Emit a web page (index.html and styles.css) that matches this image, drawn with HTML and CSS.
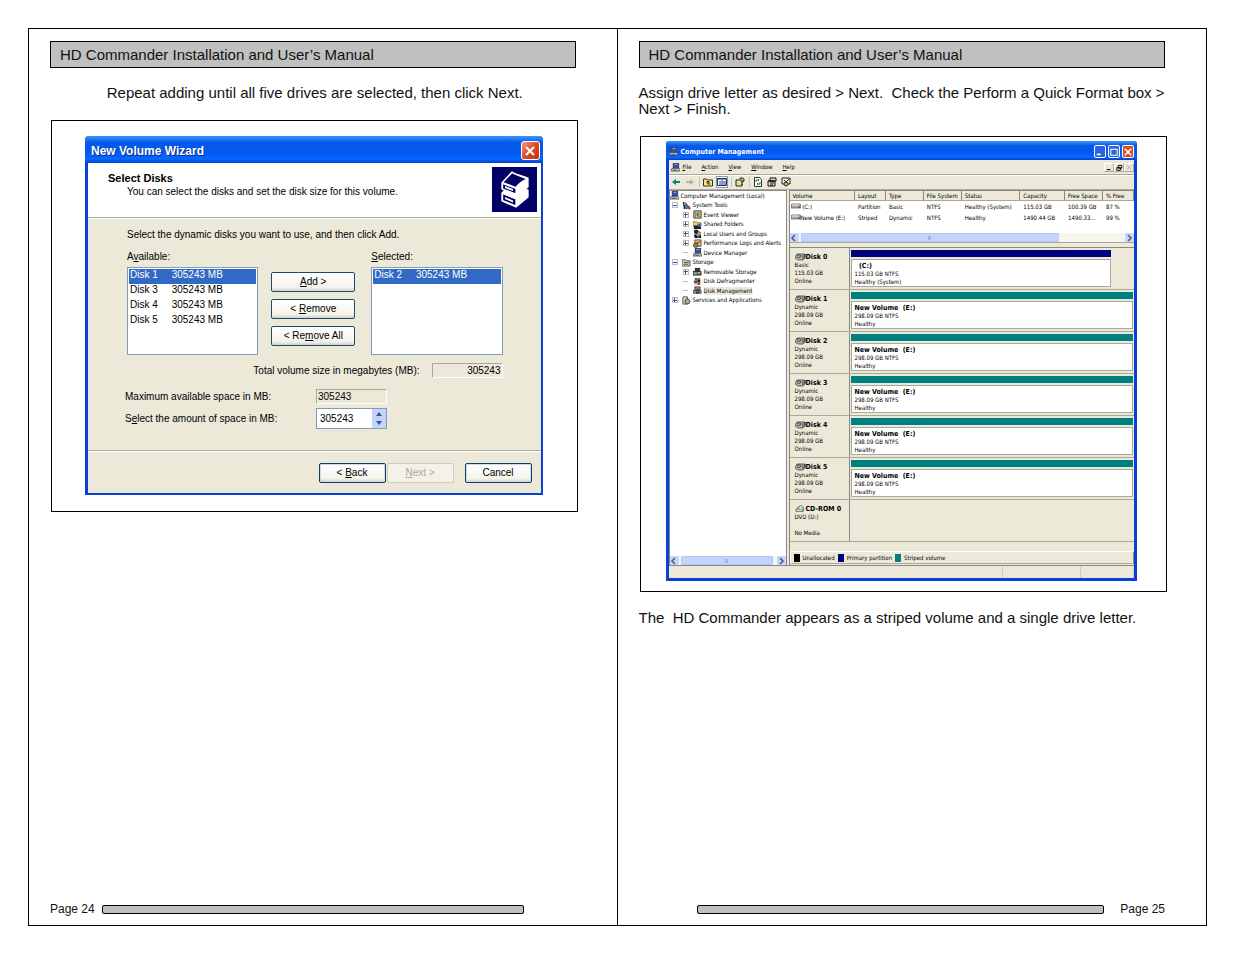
FILE: index.html
```html
<!DOCTYPE html>
<html lang="en">
<head>
<meta charset="utf-8">
<title>HD Commander Installation and User’s Manual</title>
<link rel="stylesheet" href="styles.css">
</head>
<body>
<svg class="defs" aria-hidden="true">
  <symbol id="pc" viewBox="0 0 10 10"><path d="M2 0h7v6H2z" fill="#445"/><path d="M3 1h5v4H3z" fill="#2b50c8"/><path d="M4 1h3v1H4z" fill="#9bd"/><path d="M1 6h8l1 3H0z" fill="#c8c8c8" stroke="#333" stroke-width=".7"/><path d="M2 8h5" stroke="#333" stroke-width=".8"/></symbol>
  <symbol id="tools" viewBox="0 0 10 10"><path d="M1 1h3v8H2z" fill="#222"/><path d="M2 2l2-1 1 3-2 1z" fill="#e8c020"/><path d="M4 3l5 6" stroke="#555" stroke-width="2"/><path d="M4 5h3v4H4z" fill="#3c72c0"/><path d="M7 6h2v3H7z" fill="#c03030"/></symbol>
  <symbol id="event" viewBox="0 0 10 10"><path d="M1 1h8v8H1z" fill="#f3e48c" stroke="#222"/><path d="M3 2v6M5 3h3M5 5h3M5 7h3" stroke="#864"/><path d="M4 3h2v4H4z" fill="#36c"/></symbol>
  <symbol id="shared" viewBox="0 0 10 10"><path d="M0 2h4l1 1h4v4H0z" fill="#f0d050" stroke="#554" stroke-width=".7"/><path d="M1 6h5l3 2v2H1z" fill="#222"/><path d="M5 4h4v3H5z" fill="#3b62c4"/></symbol>
  <symbol id="users" viewBox="0 0 10 10"><circle cx="3.500" cy="3" r="2.500" fill="#222"/><circle cx="6.500" cy="5" r="2" fill="#e0b080" stroke="#222" stroke-width=".8"/><path d="M1 6h3l1 4H2zM4 8l5-1v3H4z" fill="#111"/><path d="M5 8h2v2H5z" fill="#3b62c4"/></symbol>
  <symbol id="perf" viewBox="0 0 10 10"><path d="M2 1h7v7H2z" fill="#d8d09a" stroke="#222" stroke-width=".8"/><path d="M3 6l2-3 1 2 2-3" stroke="#c02020" fill="none"/><circle cx="3" cy="7" r="2.500" fill="#998830" stroke="#222" stroke-width=".7"/></symbol>
  <symbol id="storage" viewBox="0 0 10 10"><path d="M0 2h4l1 1h4v6H0z" fill="#c9cfae" stroke="#443" stroke-width=".8"/><path d="M2 5h5M2 7h5" stroke="#555"/><path d="M6 4h2v2H6z" fill="#5a8"/></symbol>
  <symbol id="remov" viewBox="0 0 10 10"><path d="M2 1h6v4H2z" fill="#333"/><path d="M0 5h9v4H0z" fill="#666" stroke="#111" stroke-width=".8"/><path d="M1 6h3v2H1z" fill="#6cc48a"/><path d="M5 6h3v1H5z" fill="#ddd"/></symbol>
  <symbol id="defrag" viewBox="0 0 10 10"><path d="M2 1h3v3H2zM5 6h3v3H5z" fill="#d22"/><path d="M5 1h3v3H5z" fill="#2aa050"/><path d="M1 4h4v3H1z" fill="#2848c8"/><path d="M5 3h3v3H5z" fill="#222"/><path d="M2 7h3v2H2z" fill="#e8c020"/></symbol>
  <symbol id="dmgmt" viewBox="0 0 10 10"><path d="M2 1h6v3H2z" fill="#999" stroke="#222" stroke-width=".8"/><path d="M0 5h9v3H0z" fill="#bbb" stroke="#222" stroke-width=".8"/><path d="M5 2l3 6-5 1z" fill="#444"/><path d="M1 6h2v1H1z" fill="#c33"/></symbol>
  <symbol id="serv" viewBox="0 0 10 10"><path d="M1 1h5v8H1z" fill="#e6dfb0" stroke="#222" stroke-width=".8"/><circle cx="6" cy="6" r="2.800" fill="#8fa4c4" stroke="#333" stroke-width=".8"/><circle cx="6" cy="6" r="1" fill="#e8c020"/></symbol>
  <symbol id="drive" viewBox="0 0 10 6"><path d="M1 1h8l1 1v3H0V2z" fill="#aaa" stroke="#555" stroke-width=".7"/><path d="M1 2h7" stroke="#eee"/><path d="M7 4h2" stroke="#333" stroke-width=".8"/></symbol>
  <symbol id="disk" viewBox="0 0 11 8"><path d="M2 1h8v4l-2 2H3L0 5z" fill="#b5b5b0" stroke="#444" stroke-width=".8"/><path d="M2 3c1-2 4-1 4 0s-2 2-4 1M8 2v4M10 1v4" stroke="#222" fill="none" stroke-width=".8"/></symbol>
  <symbol id="cd" viewBox="0 0 11 10"><path d="M0 5l2-2h7v5H0z" fill="#aaa" stroke="#444" stroke-width=".8"/><circle cx="6" cy="3.500" r="3" fill="#b7dca0" stroke="#487" stroke-width=".8"/><circle cx="6" cy="3.500" r=".8" fill="#fff"/><path d="M1 7h6" stroke="#eee"/></symbol>
  <symbol id="x" viewBox="0 0 10 10"><path d="M1 1l8 8M9 1L1 9" stroke="currentColor" stroke-width="2"/></symbol>
  <symbol id="left" viewBox="0 0 8 8"><path d="M5 1L2 4l3 3" fill="none" stroke="#4d6185" stroke-width="1.700"/></symbol>
  <symbol id="right" viewBox="0 0 8 8"><path d="M3 1l3 3-3 3" fill="none" stroke="#4d6185" stroke-width="1.700"/></symbol>
</svg>

<main class="spread">
  <section class="page">
    <h1 class="running-head">HD Commander Installation and User’s Manual</h1>
    <p class="para centered">Repeat adding until all five drives are selected, then click Next.</p>
    <figure class="figure figure-wizard">
      <div class="wizard">
        <div class="wizard-title">
          <span>New Volume Wizard</span>
          <button class="close" aria-label="Close"><svg><use href="#x"/></svg></button>
        </div>
        <div class="wizard-head">
          <div>
            <h2>Select Disks</h2>
            <p>You can select the disks and set the disk size for this volume.</p>
          </div>
          <svg class="books" viewBox="0 0 45 45" aria-hidden="true">
            <path d="M0 0h45v45H0z" fill="#000066"/>
            <g stroke="#fff" stroke-width="1.300" stroke-linejoin="round">
              <path d="M10 26l3-3 12 5 8-6 3 1v7L24 40 10 34z" fill="#fff"/>
              <path d="M10.500 26.500L24 32v7l-13.500-5.500z" fill="#000066"/>
              <path d="M13 30l8 3.500v2L13 32z" fill="#fff" stroke="none"/>
              <path d="M10 16L20 5c4 3 9 3 16 6v9L25 28 10 22z" fill="#fff"/>
              <path d="M10.500 15.500L20 5.500c4 3 9 3 15 6.500-5 2-8 4-11 8.500z" fill="#000066"/>
              <path d="M10.500 16.500L24 21.500v5.500l-13.500-5z" fill="#000066"/>
              <path d="M13 19l8 3v2l-8-3z" fill="#fff" stroke="none"/>
            </g>
          </svg>
        </div>
        <div class="wizard-body">
          <p class="hint">Select the dynamic disks you want to use, and then click Add.</p>
          <div class="picker">
            <div class="picker-list">
              <label for="available">A<u>v</u>ailable:</label>
              <select id="available" size="5">
                <option selected>Disk 1&nbsp;&nbsp;&nbsp;&nbsp; 305243 MB</option>
                <option>Disk 3&nbsp;&nbsp;&nbsp;&nbsp; 305243 MB</option>
                <option>Disk 4&nbsp;&nbsp;&nbsp;&nbsp; 305243 MB</option>
                <option>Disk 5&nbsp;&nbsp;&nbsp;&nbsp; 305243 MB</option>
              </select>
            </div>
            <div class="picker-buttons">
              <button class="btn"><u>A</u>dd &gt;</button>
              <button class="btn">&lt; <u>R</u>emove</button>
              <button class="btn">&lt; Re<u>m</u>ove All</button>
            </div>
            <div class="picker-list">
              <label for="selected"><u>S</u>elected:</label>
              <select id="selected" size="5">
                <option selected>Disk 2&nbsp;&nbsp;&nbsp;&nbsp; 305243 MB</option>
              </select>
            </div>
          </div>
          <div class="total">
            <label for="total">Total volume size in megabytes (MB):</label>
            <input class="field readonly right" id="total" value="305243" readonly>
          </div>
          <div class="amounts">
            <label for="max">Maximum available space in MB:</label>
            <input class="field readonly" id="max" value="305243" readonly>
            <label for="amount">S<u>e</u>lect the amount of space in MB:</label>
            <div class="spinner">
              <input class="field" id="amount" value="305243">
              <div class="spin-buttons">
                <button aria-label="Increase"><svg viewBox="0 0 8 6"><path d="M4 1l3 4H1z"/></svg></button>
                <button aria-label="Decrease"><svg viewBox="0 0 8 6"><path d="M4 5L1 1h6z"/></svg></button>
              </div>
            </div>
          </div>
        </div>
        <div class="wizard-foot">
          <button class="btn strong">&lt; <u>B</u>ack</button>
          <button class="btn strong" disabled><u>N</u>ext &gt;</button>
          <button class="btn strong cancel">Cancel</button>
        </div>
      </div>
    </figure>
    <footer class="page-foot"><span>Page 24</span><i class="rule"></i></footer>
  </section>

  <section class="page">
    <h1 class="running-head">HD Commander Installation and User’s Manual</h1>
    <p class="para">Assign drive letter as desired &gt; Next.&nbsp; Check the Perform a Quick Format box &gt; Next &gt; Finish.</p>
    <figure class="figure figure-console">
      <div class="console">
        <div class="console-title">
          <svg class="ico"><use href="#pc"/></svg><span>Computer Management</span>
          <button class="cap" aria-label="Minimize"><svg viewBox="0 0 10 10"><path d="M1 8h5" stroke="#fff" stroke-width="2"/></svg></button>
          <button class="cap" aria-label="Maximize"><svg viewBox="0 0 10 10"><path d="M1 1.500h8V9H1z" fill="none" stroke="#fff" stroke-width="1.300"/></svg></button>
          <button class="cap cap-close" aria-label="Close"><svg><use href="#x"/></svg></button>
        </div>
        <nav class="menubar">
          <svg class="ico"><use href="#pc"/></svg>
          <button><u>F</u>ile</button><button><u>A</u>ction</button><button><u>V</u>iew</button><button><u>W</u>indow</button><button><u>H</u>elp</button>
          <span class="mdi">
            <button aria-label="Minimize document"><svg viewBox="0 0 10 10"><path d="M2 8h5" stroke="#000" stroke-width="1.500"/></svg></button>
            <button aria-label="Restore document"><svg viewBox="0 0 10 10"><path d="M4 2h5v4H4zM2 5h5v4H2z" fill="#ece9d8" stroke="#000" stroke-width="1.300"/></svg></button>
            <button aria-label="Close document" disabled><svg viewBox="0 0 10 10"><path d="M2 2l6 6M8 2L2 8" stroke="#aaa" stroke-width="1.300"/></svg></button>
          </span>
        </nav>
        <div class="toolbar">
          <button aria-label="Back"><svg viewBox="0 0 10 10"><path d="M5 2L1 5l4 3V6h4V4H5z" fill="#177c74"/></svg></button>
          <button aria-label="Forward"><svg viewBox="0 0 10 10"><path d="M5 2l4 3-4 3V6H1V4h4z" fill="#b5b3a8"/></svg></button>
          <i></i>
          <button aria-label="Up one level"><svg viewBox="0 0 10 10"><path d="M.5 2h3l1 1h5v6h-9z" fill="#f3e27a" stroke="#333"/><path d="M7 7H5V4M3.500 5.500L5 4l1.500 1.500" stroke="#111" fill="none"/></svg></button>
          <button class="pressed" aria-label="Show console tree"><svg viewBox="0 0 10 10"><path d="M.5 1.500h9v7h-9z" fill="#fff" stroke="#236"/><path d="M0 2h10M5 3v5M2 5h2M2 7h2M6 5h3M6 7h3" stroke="#236"/></svg></button>
          <i></i>
          <button aria-label="Help"><svg viewBox="0 0 10 10"><path d="M1 3h6v6H1z" fill="#eadf9a" stroke="#222"/><path d="M5 2c1-2 4-1 4 1S7 4 7 6M7 7v1" stroke="#443c00" stroke-width="1.300" fill="none"/></svg></button>
          <i></i>
          <button aria-label="Refresh"><svg viewBox="0 0 10 10"><path d="M1.500.5h5l2 2v7h-7z" fill="#fff" stroke="#333"/><path d="M3 5V3h3M7 5v2H4M5 2l1 1-1 1M5 6L4 7l1 1" stroke="#17802a" fill="none"/></svg></button>
          <button aria-label="Properties"><svg viewBox="0 0 10 10"><path d="M3 1h6v3H3zM1 4h7v5H1z" fill="#ddd" stroke="#111"/><path d="M1 4h7M3 6h4M3 8h3" stroke="#111"/></svg></button>
          <button aria-label="Rescan disks"><svg viewBox="0 0 10 10"><path d="M1 1h8v6H1z" fill="#eee" stroke="#222"/><path d="M3 3l2 2 3-3" stroke="#222" fill="none"/><circle cx="5" cy="7" r="2" fill="#d8c850" stroke="#222"/></svg></button>
        </div>
        <div class="panes">
          <div class="tree-pane">
            <ul class="tree">
              <li class="l0"><svg class="ico"><use href="#pc"/></svg>Computer Management (Local)</li>
              <li class="l1"><b class="open"></b><svg class="ico"><use href="#tools"/></svg>System Tools</li>
              <li class="l2"><b></b><svg class="ico"><use href="#event"/></svg>Event Viewer</li>
              <li class="l2"><b></b><svg class="ico"><use href="#shared"/></svg>Shared Folders</li>
              <li class="l2"><b></b><svg class="ico"><use href="#users"/></svg>Local Users and Groups</li>
              <li class="l2"><b></b><svg class="ico"><use href="#perf"/></svg>Performance Logs and Alerts</li>
              <li class="l2"><b class="leaf"></b><svg class="ico"><use href="#pc"/></svg>Device Manager</li>
              <li class="l1"><b class="open"></b><svg class="ico"><use href="#storage"/></svg>Storage</li>
              <li class="l2"><b></b><svg class="ico"><use href="#remov"/></svg>Removable Storage</li>
              <li class="l2"><b class="leaf"></b><svg class="ico"><use href="#defrag"/></svg>Disk Defragmenter</li>
              <li class="l2"><b class="leaf"></b><svg class="ico"><use href="#dmgmt"/></svg><span class="current">Disk Management</span></li>
              <li class="l1"><b></b><svg class="ico"><use href="#serv"/></svg>Services and Applications</li>
            </ul>
            <div class="hscroll"><button aria-label="Scroll left"><svg><use href="#left"/></svg></button><span class="thumb tree-thumb"></span><button aria-label="Scroll right"><svg><use href="#right"/></svg></button></div>
          </div>
          <div class="main-pane">
            <div class="volumes">
              <table>
                <colgroup><col class="c-volume"><col class="c-layout"><col class="c-type"><col class="c-fs"><col class="c-status"><col class="c-cap"><col class="c-free"><col class="c-pct"></colgroup>
                <thead><tr><th>Volume</th><th>Layout</th><th>Type</th><th>File System</th><th>Status</th><th>Capacity</th><th>Free Space</th><th>% Free</th></tr></thead>
                <tbody>
                  <tr><td><svg class="drv"><use href="#drive"/></svg> (C:)</td><td>Partition</td><td>Basic</td><td>NTFS</td><td>Healthy (System)</td><td>115.03 GB</td><td>100.39 GB</td><td>87 %</td></tr>
                  <tr><td><svg class="drv"><use href="#drive"/></svg>New Volume (E:)</td><td>Striped</td><td>Dynamic</td><td>NTFS</td><td>Healthy</td><td>1490.44 GB</td><td>1490.33...</td><td>99 %</td></tr>
                </tbody>
              </table>
              <div class="hscroll"><button aria-label="Scroll left"><svg><use href="#left"/></svg></button><span class="thumb vol-thumb"></span><button aria-label="Scroll right"><svg><use href="#right"/></svg></button></div>
            </div>
            <div class="disks">
              <div class="disk"><div class="disk-info"><strong><svg class="dsk"><use href="#disk"/></svg>Disk 0</strong>Basic<br>115.03 GB<br>Online</div><div class="vol primary"><div class="vol-box"><strong>&nbsp; (C:)</strong>115.03 GB NTFS<br>Healthy (System)</div></div></div>
              <div class="disk"><div class="disk-info"><strong><svg class="dsk"><use href="#disk"/></svg>Disk 1</strong>Dynamic<br>298.09 GB<br>Online</div><div class="vol"><div class="vol-box"><strong>New Volume&nbsp; (E:)</strong>298.09 GB NTFS<br>Healthy</div></div></div>
              <div class="disk"><div class="disk-info"><strong><svg class="dsk"><use href="#disk"/></svg>Disk 2</strong>Dynamic<br>298.09 GB<br>Online</div><div class="vol"><div class="vol-box"><strong>New Volume&nbsp; (E:)</strong>298.09 GB NTFS<br>Healthy</div></div></div>
              <div class="disk"><div class="disk-info"><strong><svg class="dsk"><use href="#disk"/></svg>Disk 3</strong>Dynamic<br>298.09 GB<br>Online</div><div class="vol"><div class="vol-box"><strong>New Volume&nbsp; (E:)</strong>298.09 GB NTFS<br>Healthy</div></div></div>
              <div class="disk"><div class="disk-info"><strong><svg class="dsk"><use href="#disk"/></svg>Disk 4</strong>Dynamic<br>298.09 GB<br>Online</div><div class="vol"><div class="vol-box"><strong>New Volume&nbsp; (E:)</strong>298.09 GB NTFS<br>Healthy</div></div></div>
              <div class="disk"><div class="disk-info"><strong><svg class="dsk"><use href="#disk"/></svg>Disk 5</strong>Dynamic<br>298.09 GB<br>Online</div><div class="vol"><div class="vol-box"><strong>New Volume&nbsp; (E:)</strong>298.09 GB NTFS<br>Healthy</div></div></div>
              <div class="disk"><div class="disk-info"><strong><svg class="dsk"><use href="#cd"/></svg>CD-ROM 0</strong>DVD (D:)<br><br>No Media</div></div>
            </div>
            <div class="legend"><i class="k-un"></i>Unallocated<i class="k-pri"></i>Primary partition<i class="k-str"></i>Striped volume</div>
          </div>
        </div>
        <div class="statusbar"><span></span><span></span><span></span></div>
      </div>
    </figure>
    <p class="para">The&nbsp; HD Commander appears as a striped volume and a single drive letter.</p>
    <footer class="page-foot foot-right"><i class="rule"></i><span>Page 25</span></footer>
  </section>
</main>
</body>
</html>
```
FILE: styles.css
```css
* { box-sizing: border-box; }
body { margin: 0; padding: 28px; background: #fff; color: #111; font-family: "Liberation Sans", Arial, sans-serif; }
h1, h2, p, figure, ul { margin: 0; padding: 0; font-weight: normal; }
button, input, select { font: inherit; color: inherit; margin: 0; padding: 0; }
svg { display: block; }
.defs { display: none; }

/* Manual pages */
.spread { display: grid; grid-template-columns: 1fr 1fr; min-height: calc(100vh - 56px); border: 1px solid #000; }
.page { display: flex; flex-direction: column; min-width: 0; padding: 12px 41px 10px 21px; }
.page:first-child { border-right: 1px solid #000; }
.running-head { border: 1px solid #000; background: #c0c0c0; padding: 0 9px; font-size: 15px; line-height: 25px; margin-bottom: 17px; }
.para { font-size: 15px; line-height: 16px; margin-right: -4px; }
.centered { text-align: center; }
.figure { border: 1px solid #000; margin: 19px -2px 18px 1px; }
.figure-wizard { padding: 15px 34px 16px 33px; }
.figure-console { padding: 4px 29px 10px 25px; }
.page-foot { display: flex; align-items: center; gap: 7px; margin-top: auto; padding-right: 52px; font-size: 12px; line-height: 12px; }
.rule { flex: 1; height: 9px; border: 1px solid #000; border-radius: 2px; background: #c0c0c0; }
.foot-right { gap: 16px; padding: 0 0 0 58px; }

/* New Volume Wizard */
.wizard { background: #ece9d8; border: solid #0a3fd8; border-width: 0 2px 2px 3px; border-radius: 4px 4px 0 0; font-size: 10px; line-height: 14px; color: #000; }
.wizard-title { display: flex; align-items: center; justify-content: space-between; height: 27px; margin: 0 -2px 0 -3px; padding: 2px 3px 0 6px; border-radius: 4px 4px 0 0; background: linear-gradient(#3c96ff, #0558e6 25%, #0458ee 60%, #0668ff 85%, #0340c8); color: #fff; font-size: 12px; font-weight: bold; text-shadow: 1px 1px #0a2a90; }
.close { display: grid; place-items: center; width: 19px; height: 19px; border: 1px solid #fff; border-radius: 3px; background: linear-gradient(135deg, #f09a80, #dc4a24 50%, #b83410); color: #fff; }
.close svg { width: 10px; height: 10px; }
.wizard-head { display: flex; justify-content: space-between; background: #fff; padding: 4px 4px 5px 20px; border-bottom: 1px solid #aca899; }
.wizard-head h2 { font-size: 11px; font-weight: bold; line-height: 14px; padding-top: 4px; }
.wizard-head p { padding-left: 19px; }
.books { width: 45px; height: 45px; }
.wizard-body { padding: 9px 38px 21px 39px; border-top: 1px solid #fff; border-bottom: 1px solid #aca899; }
.hint { margin-bottom: 8px; }
.picker { display: flex; }
.picker-list { display: flex; flex-direction: column; flex: 1; min-width: 0; gap: 3px; }
.picker-list select { height: 88px; border: 1px solid #7f9db9; border-radius: 0; background: #fff; padding: 1px; overflow: hidden; outline: 0; }
.picker-list option { padding: 0 1px; min-height: 0; height: 15px; line-height: 15px; }
.picker-list option:checked { background: #316ac5 linear-gradient(#316ac5, #316ac5); color: #fff; }
.picker-buttons { display: flex; flex-direction: column; gap: 7px; width: 84px; margin: 22px 16px 0 13px; }
.btn { height: 20px; border: 1px solid #1f4a70; border-radius: 2px; background: linear-gradient(#fff, #f4f3ec 80%, #d6d0c4); line-height: 16px; }
.total { display: flex; align-items: center; justify-content: flex-end; gap: 12px; margin-top: 8px; }
.field { width: 71px; height: 15px; border: 1px solid #7f9db9; background: #fff; padding: 0 1px; border-radius: 0; }
.readonly { background: #ece9d8; border-color: #aca899 #fff #fff #aca899; }
.right { text-align: right; }
.amounts { display: grid; grid-template-columns: 191px 71px; row-gap: 4px; align-items: center; margin: 11px 0 0 -2px; }
.spinner { display: flex; height: 21px; border: 1px solid #7f9db9; background: #fff; }
.spinner .field { flex: 1; width: 0; height: auto; border: 0; padding: 0 3px; }
.spin-buttons { display: grid; width: 14px; grid-template-rows: 1fr 1fr; }
.spin-buttons button { display: grid; place-items: center; border: 0; background: #c3d3fb; }
.spin-buttons svg { width: 8px; height: 6px; fill: #3b538c; }
.wizard-foot { display: flex; justify-content: flex-end; padding: 11px 9px 10px; border-top: 1px solid #fff; gap: 1px; }
.strong { width: 67px; height: 20px; border-color: #143a66; box-shadow: inset 0 0 0 1px #cfdcee; }
.strong:disabled { border-color: #cfcbb9; background: #f4f2e8; color: #aca899; box-shadow: none; }
.cancel { margin-left: 10px; }

/* Computer Management console */
.console { background: #ece9d8; border: 3px solid #0a3fd8; border-top: 0; border-radius: 3px 3px 0 0; font-family: "DejaVu Sans Condensed", "DejaVu Sans", sans-serif; font-size: 6px; line-height: 8px; color: #000; }
.ico { flex: none; width: 9px; height: 9px; }
.console-title { display: flex; align-items: center; gap: 2px; height: 19px; margin: 0 -3px; padding: 2px 3px 0; border-radius: 3px 3px 0 0; background: linear-gradient(#3c96ff, #0558e6 25%, #0458ee 60%, #0668ff 85%, #0340c8); color: #fff; font-size: 7px; font-weight: bold; }
.console-title span { flex: 1; padding-left: 1px; }
.cap { display: grid; place-items: center; width: 12px; height: 13px; border: 1px solid #fff; border-radius: 2px; background: #2b63e0; color: #fff; }
.cap svg { width: 8px; height: 8px; }
.cap-close { background: #dc4a24; }
.menubar { display: flex; align-items: center; height: 15px; border-bottom: 1px solid #aca899; padding-left: 2px; }
.menubar button { border: 0; background: none; margin-right: 10px; }
.menubar .ico { margin-right: 3px; }
.mdi { display: flex; margin-left: auto; }
.menubar .mdi button { width: 10px; height: 9px; margin: 0; border: 1px solid; border-color: #fff #aca899 #aca899 #fff; }
.mdi svg { width: 8px; height: 7px; }
.toolbar { display: flex; align-items: center; gap: 2px; height: 15px; border-top: 1px solid #fff; border-bottom: 1px solid #aca899; padding: 0 0 1px 1px; }
.toolbar button { display: grid; place-items: center; width: 12px; height: 12px; border: 1px solid transparent; background: none; }
.toolbar svg { width: 10px; height: 10px; }
.toolbar .pressed { border-color: #7f9db9; background: #fff; }
.toolbar i { width: 1px; height: 10px; margin-left: 1px; background: #c8c4b2; }
.panes { display: grid; grid-template-columns: 118px 1fr; gap: 2px; border-bottom: 1px solid #888; }
.tree-pane { display: flex; flex-direction: column; justify-content: space-between; background: #fff; border: 1px solid #888; border-width: 1px 1px 0 1px; }
.tree { display: grid; grid-auto-rows: 1fr; height: 114px; list-style: none; }
.tree li { display: flex; align-items: center; gap: 2px; white-space: nowrap; }
.tree .l1 { padding-left: 2px; }
.tree .l2 { padding-left: 13px; }
.tree b { position: relative; flex: none; width: 6px; height: 6px; margin-right: 2px; border: 1px solid #b4bcc8; background: linear-gradient(#555, #555) center / 1px 4px no-repeat, linear-gradient(#555, #555) center / 4px 1px no-repeat; }
.tree .open { background: linear-gradient(#555, #555) center / 4px 1px no-repeat; }
.tree .leaf { border: 0; background: linear-gradient(#bbb, #bbb) center / 5px 1px no-repeat; }
.current { background: #ece9d8; }
.hscroll { display: flex; height: 9px; background: #f6f5f0; }
.hscroll button { width: 9px; border: 0; border-radius: 1px; background: #c8d6fb; flex: none; }
.hscroll button:last-child { margin-left: auto; }
.hscroll svg { width: 8px; height: 8px; }
.thumb { margin-left: 2px; border: 1px solid #b4c8f6; border-radius: 1px; background: linear-gradient(90deg, #9db4e8, #9db4e8) center / 3px 4px no-repeat #c3d3fd; }
.tree-thumb { width: 80%; }
.vol-thumb { width: 75%; }
.main-pane { display: flex; flex-direction: column; border-left: 1px solid #888; min-width: 0; }
.volumes { border-top: 1px solid #888; background: #fff; border-bottom: 1px solid #aca899; }
.volumes table { width: 100%; table-layout: fixed; border-collapse: separate; border-spacing: 0; margin-bottom: 10px; }
.volumes th, .volumes td { padding: 0 0 0 3px; font-weight: normal; text-align: left; white-space: nowrap; line-height: 11px; height: 11px; }
.volumes th { background: #ece9d8; line-height: 9px; height: 10px; border-right: 1px solid #888; border-bottom: 1px solid #aca899; }
.volumes td:first-child { padding-left: 1px; }
.c-volume { width: 19%; } .c-layout { width: 9%; } .c-type { width: 11%; } .c-fs { width: 11%; } .c-status { width: 17%; } .c-cap { width: 13%; } .c-free { width: 11%; } .c-pct { width: 9%; }
.drv { display: inline-block; width: 10px; height: 6px; }
.disks { margin-top: 4px; border-top: 1px solid #888; }
.disk { display: grid; grid-template-columns: 60px 1fr; height: 42px; border-bottom: 1px solid #aca899; }
.disk-info { border-right: 1px solid #888; padding: 4px 0 0 5px; }
.disk strong, .vol strong { display: flex; align-items: center; height: 9px; font-size: 7px; }
.dsk { width: 11px; height: 8px; }
.vol { display: flex; flex-direction: column; margin: 2px 1px 2px; border-top: 7px solid #008080; }
.vol-box { flex: 1; margin-top: 2px; padding: 1px 0 0 3px; border: 1px solid #aca899; background: #fff; }
.primary { border-top-color: #000080; margin-right: 23px; }
.legend { display: flex; align-items: center; gap: 3px; height: 13px; margin: 9px 0 1px; padding-left: 3px; border: 1px solid; border-color: #fff #888 #aca899 #fff; }
.legend i { width: 6px; height: 8px; }
.k-un { background: #000; } .k-pri { background: #000080; } .k-str { background: #008080; }
.statusbar { display: grid; grid-template-columns: 334px 78px 1fr; height: 12px; }
.statusbar span { border-right: 1px solid #d2cebd; }
```
